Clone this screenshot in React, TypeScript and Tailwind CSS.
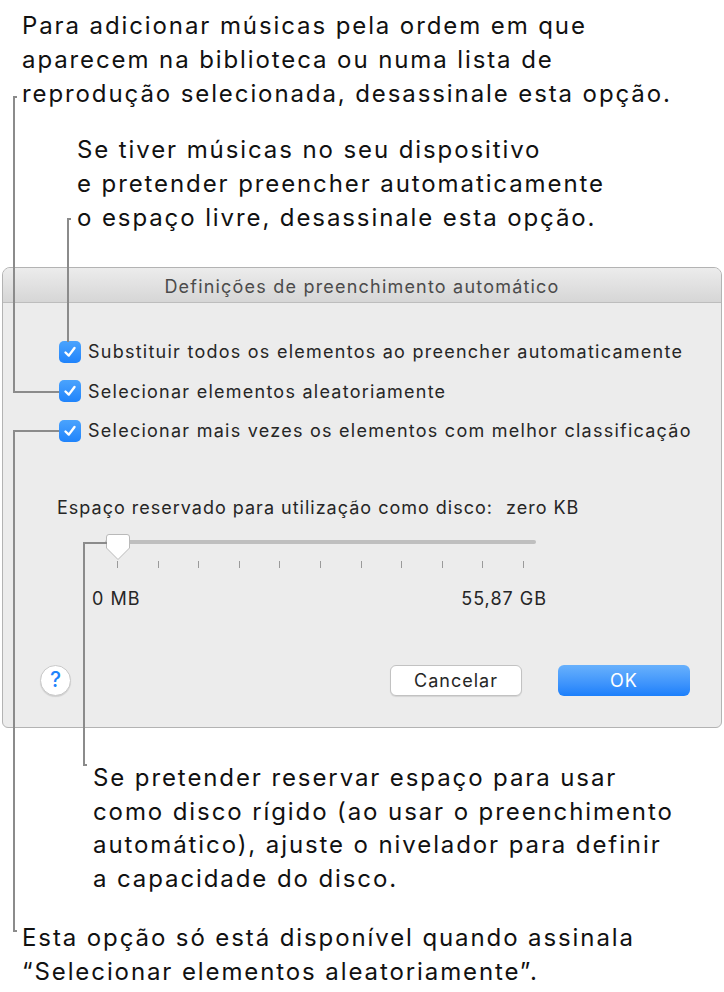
import React from "react";

function Check() {
  return (
    <div className="w-[22px] h-[22px] rounded-[5px] bg-gradient-to-b from-[#4aa3fd] to-[#1f83fb] flex items-center justify-center shrink-0">
      <svg width="14" height="14" viewBox="0 0 14 14">
        <path d="M2.5 7.5 L5.8 10.6 L11.5 3" fill="none" stroke="white" strokeWidth="2.4" strokeLinecap="round" strokeLinejoin="round" />
      </svg>
    </div>
  );
}

function Row({ label }: { label: string }) {
  return (
    <div className="h-[39.5px] flex items-center gap-[7px] pl-[56px]">
      <Check />
      <span className="text-[18px] tracking-[1.25px] text-[#262626] whitespace-nowrap">{label}</span>
    </div>
  );
}

function Thumb() {
  return (
    <svg width="26" height="28" viewBox="0 0 26 28">
      <path d="M4 1.5 H22 Q24.5 1.5 24.5 4 V15 L13 26.5 L1.5 15 V4 Q1.5 1.5 4 1.5 Z" fill="white" stroke="#b9b9b9" strokeWidth="1" />
    </svg>
  );
}

// leader lines sit over the page, so they are absolutely placed
function Leaders() {
  const c = "absolute bg-[#8b8b8b]";
  return (
    <>
      {/* 1: top text -> second checkbox */}
      <div className={`${c} left-[13px] top-[96px] w-[2px] h-[297px]`} />
      <div className={`${c} left-[13px] top-[96px] w-[4px] h-[2px]`} />
      <div className={`${c} left-[13px] top-[391px] w-[46px] h-[2px]`} />
      {/* 2: second text -> first checkbox */}
      <div className={`${c} left-[67px] top-[218px] w-[2px] h-[124px]`} />
      <div className={`${c} left-[67px] top-[218px] w-[4px] h-[2px]`} />
      {/* 3: third checkbox -> bottom text */}
      <div className={`${c} left-[13px] top-[430px] w-[46px] h-[2px]`} />
      <div className={`${c} left-[13px] top-[430px] w-[2px] h-[502px]`} />
      <div className={`${c} left-[13px] top-[930px] w-[4px] h-[2px]`} />
      {/* 4: slider -> middle text */}
      <div className={`${c} left-[83px] top-[542px] w-[24px] h-[2px]`} />
      <div className={`${c} left-[83px] top-[542px] w-[2px] h-[224px]`} />
      <div className={`${c} left-[83px] top-[764px] w-[4px] h-[2px]`} />
    </>
  );
}

export default function App() {
  return (
    <div
      className="relative w-[724px] h-[992px] bg-white overflow-hidden text-[#111]"
      style={{ fontFamily: "Inter, 'Noto Sans', sans-serif" }}
    >
      <div className="pt-[9px] pl-[22px] text-[24px] leading-[34px] tracking-[1.9px] whitespace-nowrap">
        Para adicionar músicas pela ordem em que
        <br />
        aparecem na biblioteca ou numa lista de
        <br />
        reprodução selecionada, desassinale esta opção.
      </div>
      <div className="mt-[22px] pl-[77px] text-[24px] leading-[34px] tracking-[1.9px] whitespace-nowrap">
        Se tiver músicas no seu dispositivo
        <br />
        e pretender preencher automaticamente
        <br />
        o espaço livre, desassinale esta opção.
      </div>

      {/* dialog */}
      <div className="mt-[32px] mx-[2px] h-[461px] rounded-t-[8px] rounded-b-[6px] border border-[#b3b3b3] bg-[#ececec] overflow-hidden flex flex-col">
        <div className="h-[35px] shrink-0 bg-gradient-to-b from-[#ececec] to-[#d6d6d6] border-b border-[#bdbdbd] flex items-center justify-center pt-[2px] text-[18px] tracking-[1.2px] text-[#4b4b4b]">
          Definições de preenchimento automático
        </div>
        <div className="pt-[29px]">
          <Row label="Substituir todos os elementos ao preencher automaticamente" />
          <Row label="Selecionar elementos aleatoriamente" />
          <Row label="Selecionar mais vezes os elementos com melhor classificação" />
        </div>
        <div className="mt-[46px] pl-[54px] flex text-[18px] tracking-[1px] text-[#262626] leading-[22px] whitespace-nowrap">
          <span>Espaço reservado para utilização como disco:</span>
          <span className="ml-[13px]">zero KB</span>
        </div>

        {/* slider */}
        <div className="relative ml-[102px] mt-[10px] w-[431px]">
          <div className="h-[4px] mt-[11px] rounded-full bg-[#bfbfbf]" />
          <div className="absolute left-0 top-[4px]">
            <Thumb />
          </div>
          <div className="mt-[17px] px-[12px] flex justify-between">
            {Array.from({ length: 11 }).map((_, i) => (
              <div key={i} className="w-[1px] h-[7px] bg-[#9a9a9a]" />
            ))}
          </div>
        </div>
        <div className="mt-[20px] ml-[89px] w-[455px] flex justify-between text-[18px] tracking-[1px] text-[#262626] leading-[22px]">
          <span>0 MB</span>
          <span>55,87 GB</span>
        </div>

        <div className="mt-[55px] flex items-center pl-[37px] pr-[31px]">
          <div className="w-[31px] h-[31px] rounded-full bg-white border border-[#c9c9c9] shadow-[0_1px_1px_rgba(0,0,0,0.12)] flex items-center justify-center text-[21px] font-medium text-[#1f83fb]">
            ?
          </div>
          <div className="flex-1" />
          <div className="w-[132px] h-[31px] rounded-[6px] bg-white border border-[#c2c2c2] shadow-[0_1px_1px_rgba(0,0,0,0.1)] flex items-center justify-center text-[18px] tracking-[1px] text-[#262626]">
            Cancelar
          </div>
          <div className="ml-[36px] w-[132px] h-[31px] rounded-[6px] bg-gradient-to-b from-[#68b1fc] to-[#1a7ffb] flex items-center justify-center text-[18px] tracking-[1px] text-white">
            OK
          </div>
        </div>
      </div>

      <div className="mt-[33px] pl-[93px] text-[24px] leading-[33.5px] tracking-[1.9px] whitespace-nowrap">
        Se pretender reservar espaço para usar
        <br />
        como disco rígido (ao usar o preenchimento
        <br />
        automático), ajuste o nivelador para definir
        <br />a capacidade do disco.
      </div>
      <div className="mt-[26px] pl-[22px] text-[24px] leading-[33.5px] tracking-[1.9px] whitespace-nowrap">
        Esta opção só está disponível quando assinala
        <br />
        “Selecionar elementos aleatoriamente”.
      </div>

      <Leaders />
    </div>
  );
}
